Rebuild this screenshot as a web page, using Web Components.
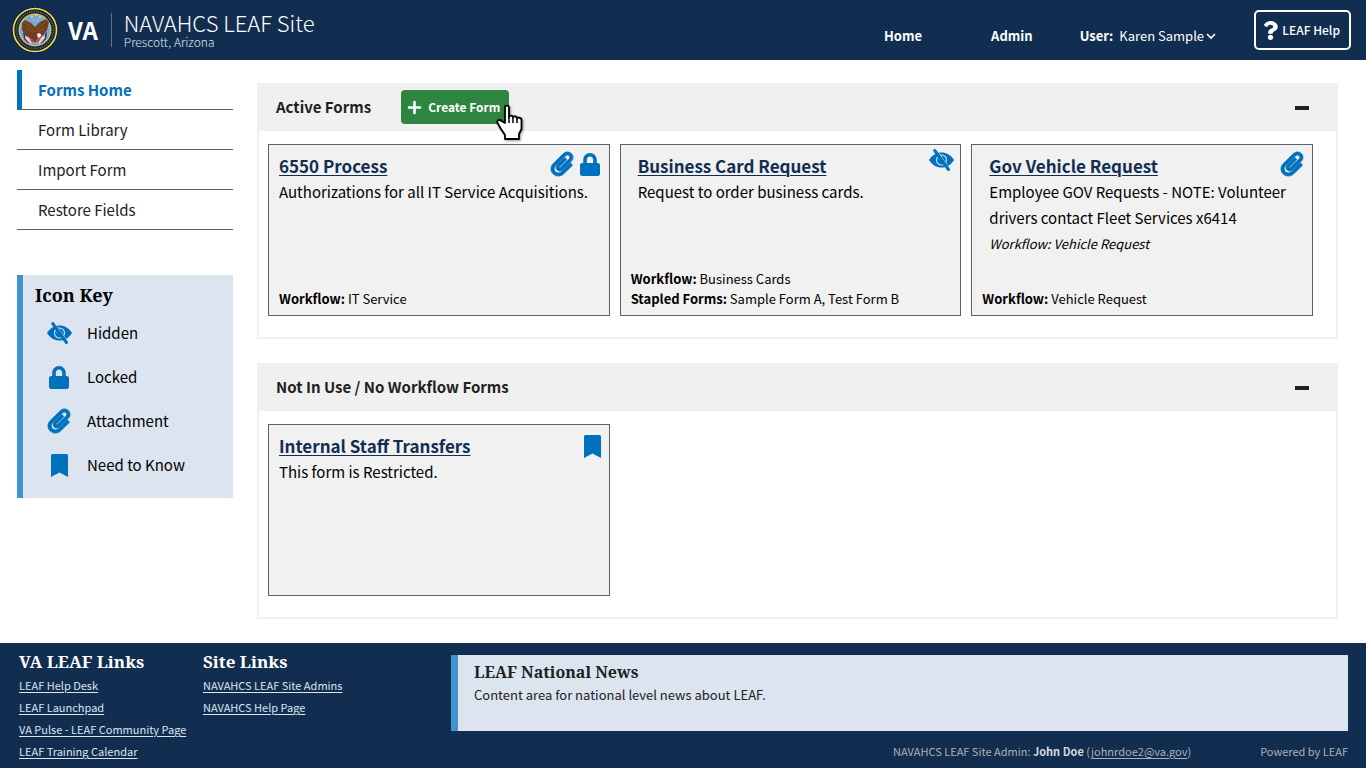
<!DOCTYPE html>
<html lang="en">
<head>
<meta charset="utf-8">
<meta name="viewport" content="width=device-width, initial-scale=1">
<title>NAVAHCS LEAF Site</title>
<style>
  :root {
    --navy: #112e51;
    --blue: #0071bc;
    --sky: #3e94cf;
    --pale: #dce4ef;
    --gray: #f0f0f0;
    --line: #5b616b;
    --serif: "Noto Serif", "Liberation Serif", serif;
  }
  body {
    margin: 0;
    min-height: 100vh;
    display: flex;
    flex-direction: column;
    font: 16px/24px "Noto Sans CJK SC", "Open Sans", sans-serif;
    color: #000;
    background: #fff;
  }
  main {
    flex: 1;
    display: grid;
    grid-template-columns: 216px 1fr;
    column-gap: 24px;
    padding: 10px 28px 24px 17px;
  }
  aside { display: flex; flex-direction: column; gap: 45px; }
  .panels { display: flex; flex-direction: column; gap: 24px; padding-top: 13px; }
</style>
</head>
<body>
<leaf-header></leaf-header>
<main>
  <aside>
    <leaf-nav></leaf-nav>
    <leaf-icon-key></leaf-icon-key>
  </aside>
  <div class="panels">
    <leaf-panel>
      <span slot="heading">Active Forms</span>
      <leaf-create-button slot="actions">Create Form</leaf-create-button>
      <leaf-card icons="clip lock">
        <span slot="name">6550 Process</span>
        Authorizations for all IT Service Acquisitions.
        <div slot="meta"><b>Workflow:</b> IT Service</div>
      </leaf-card>
      <leaf-card icons="eye" inset>
        <span slot="name">Business Card Request</span>
        Request to order business cards.
        <div slot="meta"><b>Workflow:</b> Business Cards</div>
        <div slot="meta"><b>Stapled Forms:</b> Sample Form A, Test Form B</div>
      </leaf-card>
      <leaf-card icons="clip" inset>
        <span slot="name">Gov Vehicle Request</span>
        Employee GOV Requests - NOTE: Volunteer drivers contact Fleet Services x6414
        <em slot="note">Workflow: Vehicle Request</em>
        <div slot="meta"><b>Workflow:</b> Vehicle Request</div>
      </leaf-card>
    </leaf-panel>
    <leaf-panel>
      <span slot="heading">Not In Use / No Workflow Forms</span>
      <leaf-card icons="bookmark">
        <span slot="name">Internal Staff Transfers</span>
        This form is Restricted.
      </leaf-card>
    </leaf-panel>
  </div>
</main>
<leaf-footer></leaf-footer>

<script>
const ICONS = {
  eye: [25, 22, '<path d="M0 11C3 6 7.500 3.500 12.500 3.500S22 6 25 11c-3 5-7.500 7.500-12.500 7.500S3 16 0 11z"/><circle cx="12.500" cy="11" r="5" fill="none" stroke="#dce4ef" stroke-width="1.100"/><path d="M10 10.500c0-1.500 1.200-2.600 2.700-2.600" fill="none" stroke="#dce4ef"/><path d="M7.600 1l13.900 19.500" stroke="#dce4ef" stroke-width=".8"/><path d="M5.700 1.500l13.800 19" stroke="currentColor" stroke-width="3" stroke-linecap="round"/>'],
  lock: [448, 512, '<path d="M400 224h-24v-72C376 68.200 307.800 0 224 0S72 68.200 72 152v72H48c-26.500 0-48 21.500-48 48v192c0 26.500 21.500 48 48 48h352c26.500 0 48-21.500 48-48V272c0-26.500-21.500-48-48-48zm-104 0H152v-72c0-39.700 32.300-72 72-72s72 32.300 72 72v72z"/>'],
  clip: [448, 512, '<path stroke="currentColor" stroke-width="18" d="M43.246 466.142c-58.43-60.289-57.341-157.511 1.386-217.581L254.392 34c44.316-45.332 116.351-45.336 160.671 0 43.89 44.894 43.943 117.329 0 162.276L232.214 383.128c-29.855 30.537-78.633 30.111-107.982-.998-28.275-29.97-27.368-77.473 1.452-106.953l143.743-146.835c6.182-6.314 16.312-6.422 22.626-.241l22.861 22.379c6.315 6.182 6.422 16.312.241 22.626L171.427 319.927c-4.932 5.045-5.236 13.428-.648 18.292 4.372 4.634 11.245 4.711 15.688.165l182.849-186.851c19.613-20.062 19.613-52.725-.011-72.798-19.189-19.627-49.957-19.637-69.154 0L90.39 293.295c-34.763 35.56-35.299 93.12-1.191 128.313 34.01 35.093 88.985 35.137 123.058.286l172.06-175.999c6.177-6.319 16.307-6.433 22.626-.256l22.877 22.364c6.319 6.177 6.434 16.307.256 22.626l-172.06 175.998c-59.576 60.938-155.943 60.216-214.77-.485z"/>'],
  bookmark: [384, 512, '<path d="M0 512V36C0 16 16 0 36 0h312c20 0 36 16 36 36v476L192 410 0 512z"/>'],
  question: [384, 512, '<path d="M202.021 0C122.202 0 70.503 32.703 29.914 91.026c-7.363 10.58-5.093 25.086 5.178 32.874l43.138 32.709c10.373 7.865 25.132 6.026 33.253-4.148 25.049-31.381 43.63-49.449 82.757-49.449 30.764 0 68.816 19.799 68.816 49.631 0 22.552-18.617 34.134-48.993 51.164-35.423 19.86-82.299 44.576-82.299 106.405V320c0 13.255 10.745 24 24 24h72.471c13.255 0 24-10.745 24-24v-5.773c0-42.86 125.268-44.645 125.268-160.627C377.504 66.256 286.902 0 202.021 0zM192 373.459c-38.196 0-69.271 31.075-69.271 69.271 0 38.195 31.075 69.27 69.271 69.27s69.271-31.075 69.271-69.27-31.075-69.271-69.271-69.271z"/>'],
  plus: [13, 13, '<path d="M6.500 1v11M1 6.500h11" fill="none" stroke="currentColor" stroke-width="2.600" stroke-linecap="round"/>'],
  chevron: [10, 7, '<path d="M1.500 1.500L5 5l3.500-3.500" fill="none" stroke="currentColor" stroke-width="1.700" stroke-linecap="round"/>'],
  hand: [28, 36, '<path d="M9 2.500c0-2.600 4-2.600 4 0V12c0-2 4-2 4 .5 0-1.800 4-1.500 4 1 0-1.500 4.500-1 4.500 1.500V24l-2.500 5v5H9v-4l-4-6-3.500-6c-1-2.500 2-4 4-2L9 18z" fill="#fff" stroke="#000" stroke-width="1.800" stroke-linejoin="round"/><path d="M13 12v6M17 13v5M21 14v4" stroke="#000" stroke-width="1.500"/>'],
  seal: [46, 46, `<circle cx="23" cy="23" r="23" fill="#0b1b36"/>
    <circle cx="23" cy="23" r="21.500" fill="#14233f" stroke="#f6df4a" stroke-width="1.600"/>
    <circle cx="23" cy="23" r="18.500" fill="none" stroke="#6f7450" stroke-width="1.700" stroke-dasharray="1 1.300"/>
    <circle cx="23" cy="23" r="15.800" fill="#78a8dc" stroke="#eacb3b" stroke-width="1.200"/>
    <path d="M11 25l9 9-3 3-5-5zM35 25l-9 9 3 3 5-5z" fill="#27306b"/>
    <path d="M14 24l8 10-4 3-5-6zM32 24l-8 10 4 3 5-6z" fill="#e9cdd5"/>
    <path d="M15 26l5 9M18 27l3 8M31 26l-5 9M28 27l-3 8" stroke="#c9384f" stroke-width="1.200"/>
    <path d="M10 16l3-3 6 3 4 4 5-5 6-3 3 3-2 8-4 6-5 2-3 5-3-4-6-3-4-6z" fill="#70401e"/>
    <path d="M13 16l6 4 4 5 5-6 6-4M14 21l7 4M32 21l-6 4" fill="none" stroke="#8a5529"/>
    <path d="M25 27c2-2 5 0 4 2l-3 2z" fill="#fff"/>
    <path d="M19 10h2M23 8h2M27 10h2M21 13h1M25 13h1" stroke="#f6df4a" stroke-width="1.500"/>`]
};

const define = (name, html, setup) => {
  const template = document.createElement('template');
  template.innerHTML = html;
  customElements.define(name, class extends HTMLElement {
    connectedCallback() {
      if (this.shadowRoot) return;
      this.attachShadow({ mode: 'open' }).append(template.content.cloneNode(true));
      if (setup) setup(this, this.shadowRoot);
    }
  });
};

/* A single glyph; --w and --h give its box. */
define('leaf-icon', `
  <style>
    :host { display: inline-flex; flex: none; width: var(--w, 24px); height: var(--h, 24px); }
    svg { width: 100%; height: 100%; fill: currentColor; overflow: visible; }
    :host([name=eye]) { --w: 25px; --h: 22px; }
    :host([name=lock]) { --w: 20px; --h: 23px; }
    :host([name=clip]) { --w: 22px; --h: 24px; }
    :host([name=bookmark]) { --w: 17px; --h: 23px; }
    :host([name=question]) { --w: 15px; --h: 19px; }
    :host([name=plus]) { --w: 13px; --h: 13px; }
    :host([name=chevron]) { --w: 10px; --h: 7px; }
    :host([name=hand]) { --w: 28px; --h: 36px; }
    :host([name=seal]) { --w: 46px; --h: 46px; }
  </style>`, (el, root) => {
  const [w, h, body] = ICONS[el.getAttribute('name')];
  const box = document.createElement('template');
  box.innerHTML = `<svg viewBox="0 0 ${w} ${h}" preserveAspectRatio="none" aria-hidden="true">${body}</svg>`;
  root.append(box.content);
});

define('leaf-header', `
  <style>
    :host { display: block; background: var(--navy); color: #fff; }
    header { display: flex; align-items: center; min-height: 60px; padding: 0 15px 0 12px; box-sizing: border-box; }
    .va { margin: 0 13px 0 10px; font-size: 24px; line-height: 34px; font-weight: 700; }
    .site { border-left: 1px solid #5b7290; padding-left: 12px; height: 34px; display: flex; flex-direction: column; justify-content: center; }
    h1 { margin: 0; font-size: 22px; line-height: 24px; font-weight: 300; }
    p { margin: 0; font-size: 12px; line-height: 16px; font-weight: 300; color: #dce4ef; }
    nav { margin-left: auto; display: flex; align-items: center; padding-top: 12px; font-size: 13px; line-height: 20px; }
    nav a { color: #fff; text-decoration: none; font-weight: 700; margin-right: 69px; }
    nav a + a { margin-right: 47px; }
    label { font-weight: 700; margin-right: 6px; }
    .pick { display: grid; align-items: center; justify-items: end; }
    .pick > * { grid-area: 1 / 1; }
    .pick leaf-icon { pointer-events: none; }
    select { appearance: none; border: 0; margin: 0; padding: 0 12px 0 0; background: none; color: #fff; font: inherit; }
    button { margin-left: 38px; height: 40px; padding: 0 9px 0 7px; display: flex; align-items: center; gap: 4px; border: 2px solid #fff; border-radius: 5px; background: none; color: #fff; font-family: inherit; font-size: 12px; line-height: 20px; font-weight: 500; }
  </style>
  <header>
    <leaf-icon name="seal"></leaf-icon>
    <span class="va">VA</span>
    <div class="site"><h1>NAVAHCS LEAF Site</h1><p>Prescott, Arizona</p></div>
    <nav>
      <a href="#home">Home</a><a href="#admin">Admin</a>
      <label for="user">User:</label>
      <span class="pick"><select id="user"><option>Karen Sample</option></select><leaf-icon name="chevron"></leaf-icon></span>
    </nav>
    <button type="button"><leaf-icon name="question"></leaf-icon>LEAF Help</button>
  </header>`);

define('leaf-nav', `
  <style>
    :host { display: block; font-size: 15px; line-height: 23px; }
    a { display: block; padding: 8px 0 8px 21px; border-bottom: 1px solid var(--line); color: #212121; text-decoration: none; }
    a.on { border-left: 5px solid var(--blue); padding-left: 16px; color: var(--blue); font-weight: 700; }
  </style>
  <nav>
    <a class="on" href="#forms">Forms Home</a>
    <a href="#library">Form Library</a>
    <a href="#import">Import Form</a>
    <a href="#restore">Restore Fields</a>
  </nav>`);

define('leaf-icon-key', `
  <style>
    :host { display: block; background: var(--pale); border-left: 6px solid var(--sky); padding: 8px 0 11px 12px; font-size: 15px; }
    h2 { margin: 0; font: 700 18px/24px var(--serif); }
    ul { margin: 4px 0 0; padding: 0; list-style: none; }
    li { display: grid; grid-template-columns: 48px 1fr; column-gap: 4px; align-items: center; height: 44px; }
    leaf-icon { justify-self: center; color: var(--blue); }
  </style>
  <h2>Icon Key</h2>
  <ul>
    <li><leaf-icon name="eye"></leaf-icon>Hidden</li>
    <li><leaf-icon name="lock"></leaf-icon>Locked</li>
    <li><leaf-icon name="clip"></leaf-icon>Attachment</li>
    <li><leaf-icon name="bookmark"></leaf-icon>Need to Know</li>
  </ul>`);

define('leaf-panel', `
  <style>
    :host { display: block; border: 2px solid var(--gray); border-top: 0; }
    header { display: flex; align-items: center; gap: 30px; height: 48px; padding: 0 26px 0 17px; background: var(--gray); }
    h2 { margin: 0; font-size: 15px; line-height: 24px; font-weight: 700; color: #212121; }
    .toggle { margin-left: auto; width: 16px; height: 24px; padding: 2px 0 0; border: 0; background: none; display: flex; align-items: center; }
    .toggle::before { content: ""; width: 14px; height: 4px; margin: auto; background: #212121; }
    .body { display: grid; grid-template-columns: repeat(3, 1fr); gap: 10px; padding: 13px 23px 21px 9px; }
  </style>
  <header>
    <h2><slot name="heading"></slot></h2>
    <slot name="actions"></slot>
    <button class="toggle" type="button" aria-label="Collapse"></button>
  </header>
  <div class="body"><slot></slot></div>`);

define('leaf-create-button', `
  <style>
    :host { display: block; position: relative; }
    button { display: flex; align-items: center; gap: 7px; height: 34px; padding: 0 9px 0 7px; border: 0; border-radius: 4px; background: #2e8540; color: #fff; font-family: inherit; font-size: 12px; line-height: 20px; font-weight: 700; }
    .pointer { position: absolute; right: -15px; top: 15px; z-index: 1; filter: drop-shadow(1px 1px 1px #0006); }
  </style>
  <button type="button"><leaf-icon name="plus"></leaf-icon><span><slot></slot></span></button>
  <leaf-icon class="pointer" name="hand"></leaf-icon>`);

define('leaf-card', `
  <style>
    :host { display: flex; flex-direction: column; position: relative; box-sizing: border-box; min-height: 172px; padding: 8px 10px 6px; border: 1px solid var(--line); background: #f1f1f1; font-size: 15px; line-height: 26px; }
    :host([inset]) .text { padding-left: 7px; }
    h3 { margin: 0; font-size: 17px; line-height: 26px; font-weight: 700; }
    a { color: var(--navy); text-underline-offset: 2px; text-decoration-thickness: 1px; }
    .icons { position: absolute; top: 7px; right: 9px; display: flex; gap: 7px; align-items: center; color: var(--blue); }
    :host([icons=eye]) .icons { top: 4px; right: 6px; }
    :host([icons=bookmark]) .icons { top: 10px; right: 8px; }
    ::slotted(em) { display: block; font-size: 13px; }
    footer { margin-top: auto; font-size: 13px; line-height: 20px; }
  </style>
  <div class="text">
    <h3><a href="#form"><slot name="name"></slot></a></h3>
    <slot></slot>
    <slot name="note"></slot>
  </div>
  <div class="icons"></div>
  <footer><slot name="meta"></slot></footer>`, (el, root) => {
  for (const name of el.getAttribute('icons').split(' ')) {
    const icon = document.createElement('leaf-icon');
    icon.setAttribute('name', name);
    root.querySelector('.icons').append(icon);
  }
});

define('leaf-footer', `
  <style>
    :host { display: block; background: var(--navy); color: #dce4ef; font-size: 11px; line-height: 22px; }
    footer { display: grid; grid-template-columns: 184px 248px 1fr; padding: 7px 18px 6px 19px; }
    h2 { margin: 0; font: 700 17px/24px var(--serif); color: #fff; }
    ul { margin: 0; padding: 0; list-style: none; }
    a { color: inherit; text-underline-offset: 2px; }
    .side { display: flex; flex-direction: column; justify-content: space-between; padding-top: 5px; }
    .news { box-sizing: border-box; min-height: 76px; padding: 5px 16px; background: var(--pale); border-left: 7px solid var(--sky); color: #212121; }
    .news h2 { color: #212121; font-size: 16px; }
    .news p { margin: 0; font-size: 13px; }
    .legal { display: flex; justify-content: flex-end; gap: 69px; color: #aeb0b5; }
    .legal b { color: #d6d7d9; }
  </style>
  <footer>
    <section>
      <h2>VA LEAF Links</h2>
      <ul>
        <li><a href="#desk">LEAF Help Desk</a></li>
        <li><a href="#launchpad">LEAF Launchpad</a></li>
        <li><a href="#pulse">VA Pulse - LEAF Community Page</a></li>
        <li><a href="#training">LEAF Training Calendar</a></li>
      </ul>
    </section>
    <section>
      <h2>Site Links</h2>
      <ul>
        <li><a href="#admins">NAVAHCS LEAF Site Admins</a></li>
        <li><a href="#help">NAVAHCS Help Page</a></li>
      </ul>
    </section>
    <div class="side">
      <section class="news">
        <h2>LEAF National News</h2>
        <p>Content area for national level news about LEAF.</p>
      </section>
      <div class="legal">
        <span>NAVAHCS LEAF Site Admin: <b>John Doe</b> (<a href="mailto:johnrdoe2@va.gov">johnrdoe2@va.gov</a>)</span>
        <span>Powered by LEAF</span>
      </div>
    </div>
  </footer>`);
</script>
</body>
</html>
